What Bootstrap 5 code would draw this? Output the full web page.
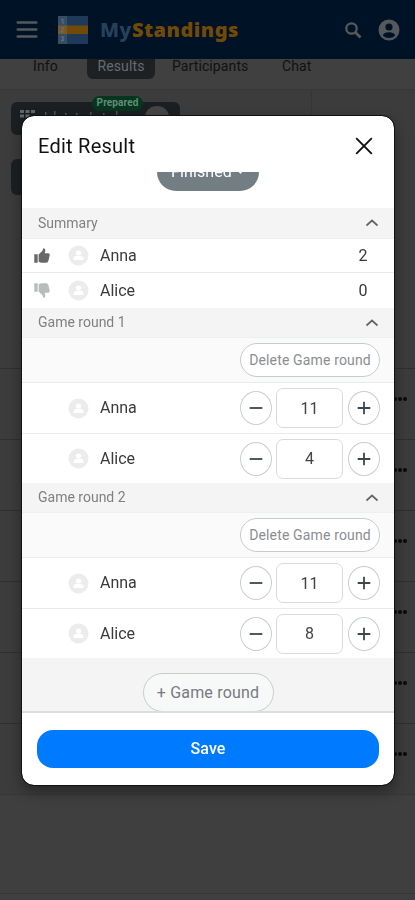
<!DOCTYPE html>
<html lang="en">
<head>
<meta charset="utf-8">
<meta name="viewport" content="width=device-width, initial-scale=1">
<title>MyStandings</title>
<link href="https://cdn.jsdelivr.net/npm/bootstrap@5.3.0/dist/css/bootstrap.min.css" rel="stylesheet">
<style>
body{font-family:Roboto,"Liberation Sans",sans-serif;background:#3f3f3f;height:900px;overflow:hidden;color:#111}
svg{display:block;flex:none}
.top-bar{height:59px;background:#001225;padding:0 15px 0 16px}
.brand-name{font:800 20px/1 "Noto Sans","Open Sans",sans-serif;color:#27415d;letter-spacing:.5px;margin-left:12px;padding-top:1px}
.brand-name b{font-weight:900;color:#714a08}
.tabs-row{height:31px;background:#404040;font-size:14px;line-height:14px;border-bottom:1px solid #383838}
.tab-item{height:20px;letter-spacing:.1px}
.tab-info{margin-left:33px;width:54px}
.tab-part{margin-left:17px;width:110px}
.tab-on{background:#1d2124;color:#666c70;border-radius:0 0 6px 6px;width:68px;text-align:center}
.filters{height:278px;background:#3c3c3c}
.filter-left{width:312px;border-right:1px solid #353535;padding:12px 0 0 11px}
.chip{height:33px;width:169px;border-radius:6px;background:#1c1f21;padding:7px 0 0 9px}
.chip + .chip{margin-top:24px;width:60px;height:36px}
.tag{left:81px;top:-6px;width:51px;height:15px;border-radius:8px;background:#07351f;color:#5f8f75;font-size:10px;line-height:14px;font-weight:700;letter-spacing:.1px}
.knob{left:134px;top:4px;width:24px;height:22px;border-radius:50%;background:#454545}
.t-row{height:71px;background:#3c3c3c;border-top:1px solid #303030;padding:28px 8px 0 0}
.t-row i{width:4px;height:4px;border-radius:50%;background:#0a0a0a;margin-left:1px}
.t-end{height:100px;border-top:1px solid #363636;border-bottom:1px solid #363636}
.dlg{margin:115px 20px 0 21px;width:374px;max-width:none}
.dlg .modal-content{height:671px;border:1px solid #111;border-radius:13px;overflow:hidden;box-shadow:0 6px 14px rgba(0,0,0,.35)}
.dlg-head{height:56px;padding:3px 21px 0 16px;flex:none}
.dlg-head h1{font-size:20px;font-weight:400;letter-spacing:.25px;color:#111}
.scroller{height:541px;overflow:hidden;flex:none;border-bottom:2px solid #dcdddd}
.state-pill{width:102px;height:38px;margin:-19px auto 17px;border-radius:19px;background:#727d84;color:#fff;font-size:16px;line-height:37px;letter-spacing:.1px}
.sec-head{height:30px;background:#f4f4f4;border-bottom:1px solid #eeefef;padding:0 15px 0 16px;font-size:14px;color:#808080}
.sec-head.first{height:31px}
.p-row{background:#fff;padding-right:14px;font-size:16px;color:#3a3a3a}
.p-row + .p-row{border-top:1px solid #e9eaeb}
.p-row .thumb{width:16px;margin-left:12px;margin-right:18px}
.p-row .who{margin-left:11px}
.sum{height:33px}.sum + .sum{height:36px}
.sum .pts{width:26px;margin-right:4px;text-align:center}
.play{height:50px}
.play .thumb{height:16px}
.del-row{height:45px;background:#fafafa;border-bottom:1px solid #e9ebeb;padding-right:14px}
.pill{border:1px solid #c6cbcc;border-radius:20px;background:#fff;color:#8b8d90;padding:0}
.pill.del{width:140px;height:34px;font-size:14px;letter-spacing:.15px}
.pill.add{width:131px;height:39px;font-size:16px;letter-spacing:.2px;color:#777a80;background:#f7f8f8}
.rnd{width:32px;height:34px;border:1px solid #c8cdd0;border-radius:50%;padding:0;background:#fff}
.num{width:67px;height:40px;border:1px solid #d8dadb;border-radius:7px;font-size:16px;text-align:center;padding:0;color:#444;margin:0 5px 0 4px;background:#fff}
.add-row{height:55px;background:#f4f4f4;padding-top:15px}
.dlg-foot{padding:17px 15px 0}
.save{height:38px;border-radius:16px;background:#007bff;color:#fff;font-size:16px;padding:0;letter-spacing:.1px;font-weight:500}
</style>
<script src="https://cdn.jsdelivr.net/npm/bootstrap@5.3.0/dist/js/bootstrap.bundle.min.js"></script>
</head>
<body>
<svg width="0" height="0" class="position-absolute" aria-hidden="true">
  <symbol id="ava" viewBox="0 0 22 22"><circle cx="11" cy="11" r="10.5" fill="#ececec"/><circle cx="11" cy="8.400" r="2.700" fill="#fff"/><path d="M5.800 15.800v-1.300q0-3 3-3h4.400q3 0 3 3v1.300z" fill="#fff"/></symbol>
  <symbol id="up" viewBox="0 0 14 10"><path d="M1.500 7.500 7 2.500 12.500 7.500" fill="none" stroke="#666" stroke-width="1.700"/></symbol>
  <symbol id="thumb" viewBox="0 0 17 17"><path d="M.3 7.300H3.900v9H.3zM4.900 7.500 9 3.500 9.800.8Q12.300.8 12 3.800L11.400 6.200H15.200q1.800.3 1.500 2l-1.400 6q-.5 2-2.300 2H8.500q-2 0-3.600-1.300z"/></symbol>
  <symbol id="minus" viewBox="0 0 14 14"><path d="M.7 7h12.600" stroke="#3d474f" stroke-width="1.800"/></symbol>
  <symbol id="plus" viewBox="0 0 14 14"><path d="M.7 7h12.600M7 .7v12.600" stroke="#3d474f" stroke-width="1.800"/></symbol>
</svg>

<header class="top-bar d-flex align-items-center">
  <svg width="22" height="20" viewBox="0 0 22 20"><path d="M1.800 2.500h18.400M1.800 9.500h18.400M1.800 16.500h18.400" stroke="#55585c" stroke-width="2.700" stroke-linecap="round"/></svg>
  <svg class="ms-3 ps-1" width="34" height="28" viewBox="0 0 30 28"><path d="M0 0h30v28H0z" fill="#1f3a58"/><path d="M0 9.500h30v8.500H0z" fill="#714a08"/><path d="M0 0h9v28H0z" fill="#8a929c" opacity=".22"/><path d="M3 4l2-1v5M3 12h3l-3 4h3M3 21h3l-2 2 2 1-3 1" fill="none" stroke="#67717c" stroke-width="1"/></svg>
  <span class="brand-name me-auto">My<b>Standings</b></span>
  <svg width="18" height="18" viewBox="0 0 18 18" fill="none" stroke="#55585c"><circle cx="7.500" cy="7.500" r="5.200" stroke-width="2.300"/><path d="m11.500 11.500 5 5" stroke-width="2.800"/></svg>
  <svg class="ms-3" width="22" height="22" viewBox="0 0 22 22"><circle cx="11" cy="11" r="10.500" fill="#55585c"/><circle cx="11" cy="8" r="3.600" fill="#001225"/><path d="M4.800 16.500q1.200-3.300 6.200-3.300t6.200 3.300q-2.500 2.500-6.200 2.500t-6.200-2.500z" fill="#001225"/></svg>
</header>
<nav class="tabs-row d-flex">
  <span class="tab-item tab-info">Info</span>
  <span class="tab-item tab-on">Results</span>
  <span class="tab-item tab-part">Participants</span>
  <span class="tab-item">Chat</span>
</nav>
<section class="filters">
  <div class="filter-left h-100">
    <div class="chip position-relative">
      <svg width="110" height="12" viewBox="0 0 110 12" fill="#63676a"><path d="M0 1h4v3H0zM5.500 1h4v3h-4zM11 1h4v3h-4zM0 5.500h4v3H0zM5.500 5.500h4v3h-4z"/><path d="M25 3h1.500v3H25zM34 2h1.500v4H34zM45 4h1.500v2H45zM56 4h1.500v2H56zM70 3h1.500v3H70zM83 4h1.500v2H83zM96 2h1.500v4H96z" opacity=".7"/></svg>
      <span class="tag position-absolute text-center">Prepared</span><span class="knob position-absolute"></span>
    </div>
    <div class="chip"></div>
  </div>
</section>
<div class="t-row d-flex justify-content-end"><i></i><i></i><i></i></div>
<div class="t-row d-flex justify-content-end"><i></i><i></i><i></i></div>
<div class="t-row d-flex justify-content-end"><i></i><i></i><i></i></div>
<div class="t-row d-flex justify-content-end"><i></i><i></i><i></i></div>
<div class="t-row d-flex justify-content-end"><i></i><i></i><i></i></div>
<div class="t-row d-flex justify-content-end"><i></i><i></i><i></i></div>
<div class="t-end"></div>

<div class="modal d-block overflow-hidden" tabindex="-1" role="dialog">
<div class="modal-dialog dlg"><div class="modal-content">
  <div class="dlg-head d-flex align-items-center justify-content-between">
    <h1 class="mb-0">Edit Result</h1>
    <svg width="18" height="18" viewBox="0 0 18 18"><path d="m1.200 1.200 15.600 15.600M16.800 1.200 1.200 16.800" stroke="#111" stroke-width="1.900"/></svg>
  </div>
  <div class="scroller">
    <div class="state-pill d-flex justify-content-center align-items-start">Finished<svg class="ms-1" width="9" height="38" viewBox="0 0 9 38"><path d="M1 17h7l-3.500 4z" fill="#fff"/></svg></div>
    <div class="sec-head first d-flex align-items-center justify-content-between">Summary<svg width="14" height="10"><use href="#up"/></svg></div>
    <div class="p-row sum d-flex align-items-center"><svg class="thumb" height="17" fill="#686868"><use href="#thumb"/></svg><svg width="21" height="21"><use href="#ava"/></svg><span class="who me-auto">Anna</span><span class="pts">2</span></div>
    <div class="p-row sum d-flex align-items-center"><svg class="thumb" width="16" height="17" viewBox="0 0 17 17" fill="#b9bcbc"><g transform="matrix(1 0 0 -1 0 17)"><use href="#thumb" width="17" height="17"/></g></svg><svg width="21" height="21"><use href="#ava"/></svg><span class="who me-auto">Alice</span><span class="pts">0</span></div>

    <div class="sec-head d-flex align-items-center justify-content-between">Game round 1<svg width="14" height="10"><use href="#up"/></svg></div>
    <div class="del-row d-flex align-items-center justify-content-end"><button class="btn pill del">Delete Game round</button></div>
    <div class="p-row play d-flex align-items-center"><span class="thumb"></span><svg width="21" height="21"><use href="#ava"/></svg><span class="who me-auto">Anna</span><button class="btn rnd d-flex align-items-center justify-content-center"><svg width="14" height="14"><use href="#minus"/></svg></button><input class="form-control num" value="11"><button class="btn rnd d-flex align-items-center justify-content-center"><svg width="14" height="14"><use href="#plus"/></svg></button></div>
    <div class="p-row play d-flex align-items-center"><span class="thumb"></span><svg width="21" height="21"><use href="#ava"/></svg><span class="who me-auto">Alice</span><button class="btn rnd d-flex align-items-center justify-content-center"><svg width="14" height="14"><use href="#minus"/></svg></button><input class="form-control num" value="4"><button class="btn rnd d-flex align-items-center justify-content-center"><svg width="14" height="14"><use href="#plus"/></svg></button></div>

    <div class="sec-head d-flex align-items-center justify-content-between">Game round 2<svg width="14" height="10"><use href="#up"/></svg></div>
    <div class="del-row d-flex align-items-center justify-content-end"><button class="btn pill del">Delete Game round</button></div>
    <div class="p-row play d-flex align-items-center"><span class="thumb"></span><svg width="21" height="21"><use href="#ava"/></svg><span class="who me-auto">Anna</span><button class="btn rnd d-flex align-items-center justify-content-center"><svg width="14" height="14"><use href="#minus"/></svg></button><input class="form-control num" value="11"><button class="btn rnd d-flex align-items-center justify-content-center"><svg width="14" height="14"><use href="#plus"/></svg></button></div>
    <div class="p-row play d-flex align-items-center"><span class="thumb"></span><svg width="21" height="21"><use href="#ava"/></svg><span class="who me-auto">Alice</span><button class="btn rnd d-flex align-items-center justify-content-center"><svg width="14" height="14"><use href="#minus"/></svg></button><input class="form-control num" value="8"><button class="btn rnd d-flex align-items-center justify-content-center"><svg width="14" height="14"><use href="#plus"/></svg></button></div>
    <div class="add-row d-flex justify-content-center"><button class="btn pill add">+ Game round</button></div>
  </div>
  <div class="dlg-foot"><button class="btn save w-100">Save</button></div>
</div></div>
</div>
</body>
</html>
